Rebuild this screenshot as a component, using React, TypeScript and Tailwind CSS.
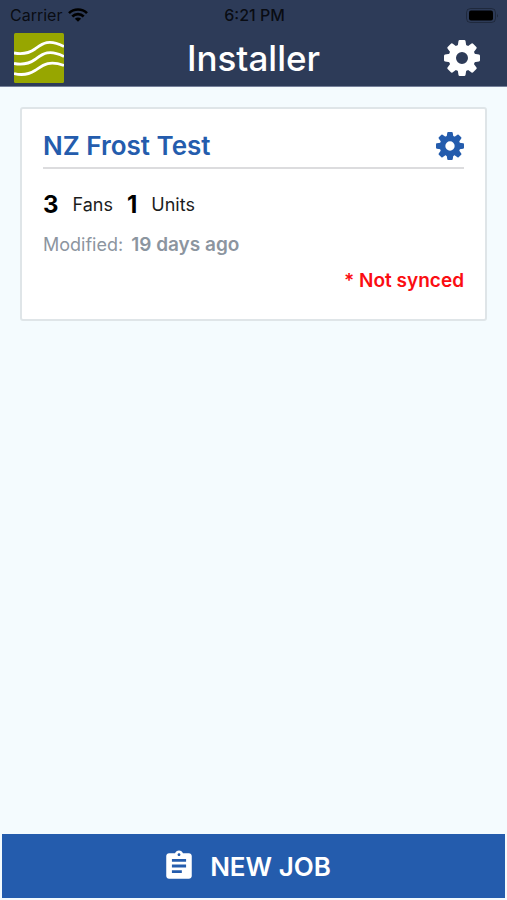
import { MdAssignment } from "react-icons/md";

const TEETH = [0, 45, 90, 135, 180, 225, 270, 315];

const job = {
  name: "NZ Frost Test",
  fans: 3,
  units: 1,
  modified: "19 days ago",
  synced: false,
};

function Gear({ className }: { className: string }) {
  return (
    <svg viewBox="-18 -18 36 36" className={className} aria-hidden="true">
      <circle r="9.7" fill="none" stroke="currentColor" strokeWidth="7.4" />
      {TEETH.map((a) => (
        <path
          key={a}
          d="M-4.300-12 -3.500-17Q-3.300-18-2.300-18H2.300Q3.300-18 3.500-17L4.300-12Z"
          fill="currentColor"
          transform={`rotate(${a})`}
        />
      ))}
    </svg>
  );
}

function Logo() {
  return (
    <svg viewBox="0 0 50 50" className="size-[50px]" role="img" aria-label="Logo">
      <rect width="50" height="50" rx="1.5" fill="#97a600" />
      <g fill="none" stroke="#fff" strokeWidth="2.8">
        <path d="M0 20C8 21.500 14 21 21 16S34 5.500 50 13.500" />
        <path d="M0 30.500C8 32 14 31.500 21 26.500S34 15.500 50 23.500" />
        <path d="M0 40.500C8 42.500 14 42 21 37.500S34 26.500 50 32.500" />
      </g>
    </svg>
  );
}

function StatusBar() {
  return (
    <div className="grid h-[30px] grid-cols-3 items-center pr-2 pl-[10px] text-[16px] leading-5 text-black/80">
      <div className="flex items-center gap-[6px]">
        <span>Carrier</span>
        <svg viewBox="0 0 20 14" className="h-[14px] w-5 text-black" aria-hidden="true">
          <g fill="none" stroke="currentColor" strokeWidth="2.6">
            <path d="M1 5.200a12.800 12.800 0 0 1 18 0" />
            <path d="M4.300 8.500a8.100 8.100 0 0 1 11.400 0" />
          </g>
          <path d="M10 13.800 6.900 10.700a4.400 4.400 0 0 1 6.200 0Z" fill="currentColor" />
        </svg>
      </div>
      <span className="text-center font-medium">6:21 PM</span>
      <svg viewBox="0 0 33 15" className="h-[15px] w-[33px] justify-self-end" aria-hidden="true">
        <rect x=".5" y=".5" width="29" height="14" rx="4" fill="none" stroke="#000" strokeOpacity=".3" />
        <rect x="3" y="2.5" width="24" height="10" rx="2" fill="#000" />
        <path d="M31 5.500q1.500 2 0 4z" fill="#000" fillOpacity=".4" />
      </svg>
    </div>
  );
}

function JobCard() {
  return (
    <article className="rounded-[3px] border-2 border-[#dfe5e8] bg-white px-[21px] pt-[21px] pb-[26px]">
      <div className="flex items-center justify-between border-b-2 border-[#dcdcde] pb-[5px]">
        <h2 className="text-[26px] leading-8 font-semibold text-[#245cad]">{job.name}</h2>
        <button type="button" aria-label="Job settings" className="text-[#245cad]">
          <Gear className="size-7" />
        </button>
      </div>
      <p className="mt-5 flex items-center text-[18px] leading-8 text-[#1c1c1c]">
        <strong className="text-[24px] font-bold text-black">{job.fans}</strong>
        <span className="ml-[14px]">Fans</span>
        <strong className="ml-[14px] text-[24px] font-bold text-black">{job.units}</strong>
        <span className="ml-[14px]">Units</span>
      </p>
      <p className="mt-3 flex items-baseline gap-2 text-[18px] leading-6 text-[#8c959f]">
        <span>Modified:</span>
        <strong className="text-[19px] font-semibold">{job.modified}</strong>
      </p>
      {!job.synced && (
        <p className="mt-3 text-right text-[19px] leading-6 font-semibold text-[#fb0d12]">* Not synced</p>
      )}
    </article>
  );
}

export default function App() {
  return (
    <div className="flex min-h-screen flex-col bg-[#f4fbfe] font-['Inter',sans-serif]">
      <header className="border-b border-[#75809a] bg-[#2d3b58]">
        <StatusBar />
        <div className="grid h-14 grid-cols-[1fr_auto_1fr] items-center px-[14px]">
          <Logo />
          <h1 className="text-[35px] leading-10 font-medium text-white">Installer</h1>
          <button type="button" aria-label="Settings" className="mr-[13px] justify-self-end text-white">
            <Gear className="size-9" />
          </button>
        </div>
      </header>
      <main className="flex-1 px-5 pt-5">
        <JobCard />
      </main>
      <footer className="px-[2px] pb-[2px]">
        <button
          type="button"
          className="flex h-16 w-full items-center justify-center gap-[14px] bg-[#245cad] pr-[14px] text-[26px] font-semibold text-white"
        >
          <MdAssignment className="size-[34px]" />
          NEW JOB
        </button>
      </footer>
    </div>
  );
}
